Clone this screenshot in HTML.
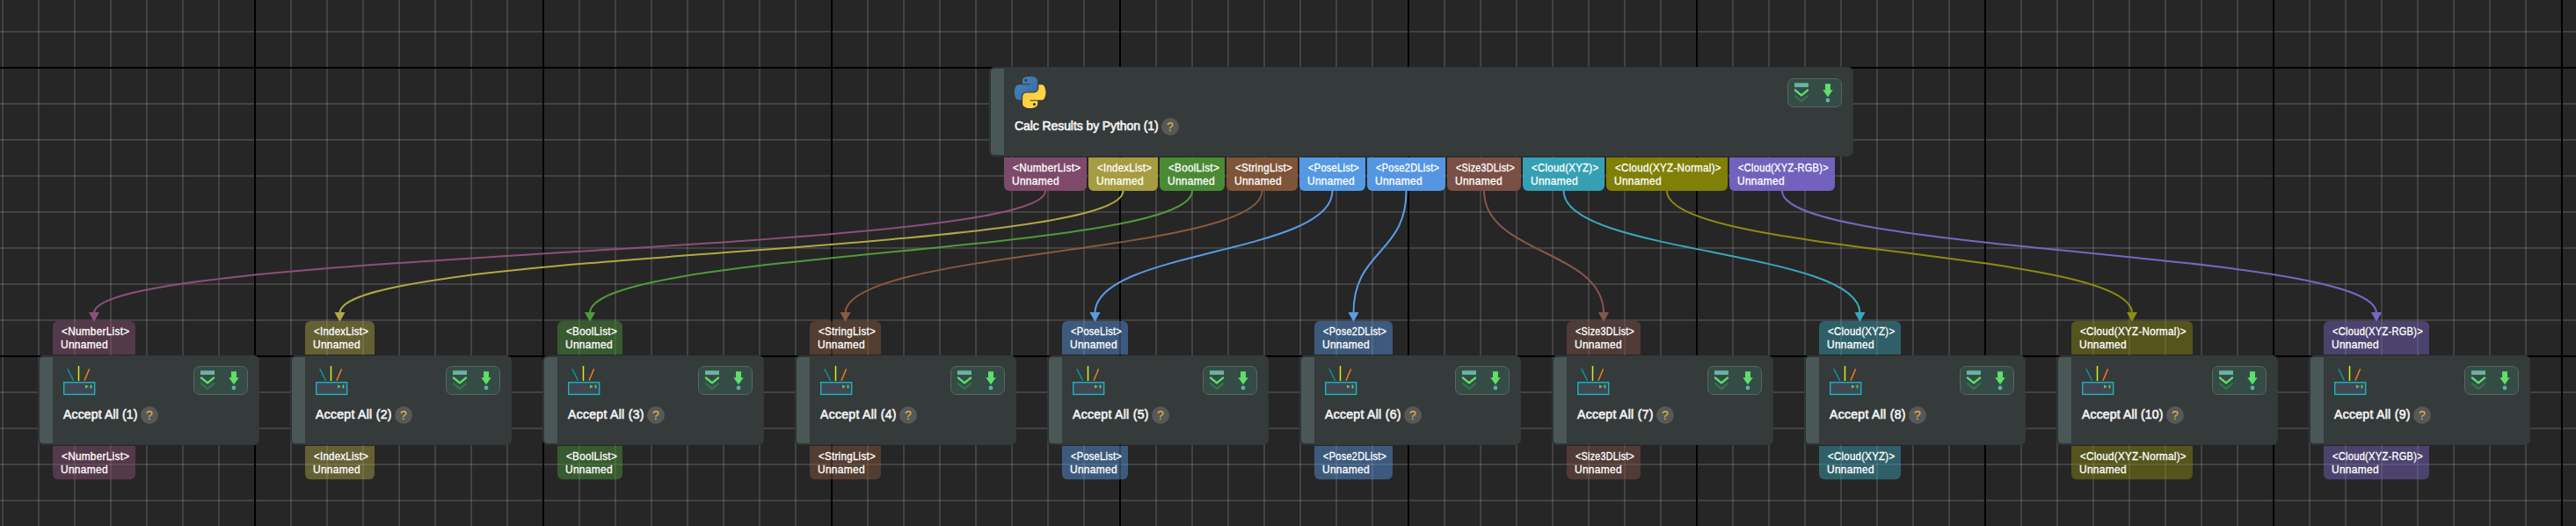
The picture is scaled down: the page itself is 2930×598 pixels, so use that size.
<!DOCTYPE html>
<html><head><meta charset="utf-8"><style>
html,body{margin:0;padding:0;}
body{width:2930px;height:598px;overflow:hidden;background:#262626;position:relative;font-family:"Liberation Sans",sans-serif;}
.abs{position:absolute;}
.node{position:absolute;box-sizing:border-box;background:#353a3a;border:1px solid #323737;border-radius:6px;}
.bar{position:absolute;left:0;top:0;bottom:0;width:15px;background:#4a5757;border:1px solid #2d3232;border-right:none;border-radius:5px 0 0 5px;}
.port{position:absolute;box-sizing:border-box;height:38px;color:#fff;font-weight:normal;font-size:12.2px;letter-spacing:0.3px;-webkit-text-stroke:0.3px #fff;line-height:15px;padding:5px 0 0 9.5px;white-space:pre;}
.port .l2{margin-left:-1px;}
.ptop{border-radius:0 0 6px 6px;}
.pin{border-radius:6px 6px 0 0;}
.pout{border-radius:0 0 6px 6px;}
.title{position:absolute;color:#f4f4f4;font-weight:normal;font-size:14px;-webkit-text-stroke:0.6px #f4f4f4;letter-spacing:-0.5px;white-space:pre;line-height:16px;}
.help{position:absolute;width:20px;height:20px;border-radius:50%;background:#575959;color:#e6b83c;font-size:14px;font-weight:normal;text-align:center;line-height:20px;}
.btns{position:absolute;box-sizing:border-box;width:62px;height:33px;border:1px solid #55675f;background:#354c46;border-radius:7px;}
</style></head><body>
<svg class="abs" style="left:0;top:0" width="2930" height="598"><rect x="2" y="0" width="2" height="598" fill="rgba(255,255,255,0.135)"/><rect x="43" y="0" width="2" height="598" fill="rgba(255,255,255,0.135)"/><rect x="84" y="0" width="2" height="598" fill="rgba(255,255,255,0.135)"/><rect x="125" y="0" width="2" height="598" fill="rgba(255,255,255,0.135)"/><rect x="166" y="0" width="2" height="598" fill="rgba(255,255,255,0.135)"/><rect x="207" y="0" width="2" height="598" fill="rgba(255,255,255,0.135)"/><rect x="248" y="0" width="2" height="598" fill="rgba(255,255,255,0.135)"/><rect x="330" y="0" width="2" height="598" fill="rgba(255,255,255,0.135)"/><rect x="371" y="0" width="2" height="598" fill="rgba(255,255,255,0.135)"/><rect x="412" y="0" width="2" height="598" fill="rgba(255,255,255,0.135)"/><rect x="453" y="0" width="2" height="598" fill="rgba(255,255,255,0.135)"/><rect x="494" y="0" width="2" height="598" fill="rgba(255,255,255,0.135)"/><rect x="535" y="0" width="2" height="598" fill="rgba(255,255,255,0.135)"/><rect x="576" y="0" width="2" height="598" fill="rgba(255,255,255,0.135)"/><rect x="658" y="0" width="2" height="598" fill="rgba(255,255,255,0.135)"/><rect x="699" y="0" width="2" height="598" fill="rgba(255,255,255,0.135)"/><rect x="740" y="0" width="2" height="598" fill="rgba(255,255,255,0.135)"/><rect x="781" y="0" width="2" height="598" fill="rgba(255,255,255,0.135)"/><rect x="822" y="0" width="2" height="598" fill="rgba(255,255,255,0.135)"/><rect x="863" y="0" width="2" height="598" fill="rgba(255,255,255,0.135)"/><rect x="904" y="0" width="2" height="598" fill="rgba(255,255,255,0.135)"/><rect x="986" y="0" width="2" height="598" fill="rgba(255,255,255,0.135)"/><rect x="1027" y="0" width="2" height="598" fill="rgba(255,255,255,0.135)"/><rect x="1068" y="0" width="2" height="598" fill="rgba(255,255,255,0.135)"/><rect x="1109" y="0" width="2" height="598" fill="rgba(255,255,255,0.135)"/><rect x="1150" y="0" width="2" height="598" fill="rgba(255,255,255,0.135)"/><rect x="1191" y="0" width="2" height="598" fill="rgba(255,255,255,0.135)"/><rect x="1232" y="0" width="2" height="598" fill="rgba(255,255,255,0.135)"/><rect x="1314" y="0" width="2" height="598" fill="rgba(255,255,255,0.135)"/><rect x="1355" y="0" width="2" height="598" fill="rgba(255,255,255,0.135)"/><rect x="1396" y="0" width="2" height="598" fill="rgba(255,255,255,0.135)"/><rect x="1437" y="0" width="2" height="598" fill="rgba(255,255,255,0.135)"/><rect x="1478" y="0" width="2" height="598" fill="rgba(255,255,255,0.135)"/><rect x="1519" y="0" width="2" height="598" fill="rgba(255,255,255,0.135)"/><rect x="1560" y="0" width="2" height="598" fill="rgba(255,255,255,0.135)"/><rect x="1642" y="0" width="2" height="598" fill="rgba(255,255,255,0.135)"/><rect x="1683" y="0" width="2" height="598" fill="rgba(255,255,255,0.135)"/><rect x="1724" y="0" width="2" height="598" fill="rgba(255,255,255,0.135)"/><rect x="1765" y="0" width="2" height="598" fill="rgba(255,255,255,0.135)"/><rect x="1806" y="0" width="2" height="598" fill="rgba(255,255,255,0.135)"/><rect x="1847" y="0" width="2" height="598" fill="rgba(255,255,255,0.135)"/><rect x="1888" y="0" width="2" height="598" fill="rgba(255,255,255,0.135)"/><rect x="1970" y="0" width="2" height="598" fill="rgba(255,255,255,0.135)"/><rect x="2011" y="0" width="2" height="598" fill="rgba(255,255,255,0.135)"/><rect x="2052" y="0" width="2" height="598" fill="rgba(255,255,255,0.135)"/><rect x="2093" y="0" width="2" height="598" fill="rgba(255,255,255,0.135)"/><rect x="2134" y="0" width="2" height="598" fill="rgba(255,255,255,0.135)"/><rect x="2175" y="0" width="2" height="598" fill="rgba(255,255,255,0.135)"/><rect x="2216" y="0" width="2" height="598" fill="rgba(255,255,255,0.135)"/><rect x="2298" y="0" width="2" height="598" fill="rgba(255,255,255,0.135)"/><rect x="2339" y="0" width="2" height="598" fill="rgba(255,255,255,0.135)"/><rect x="2380" y="0" width="2" height="598" fill="rgba(255,255,255,0.135)"/><rect x="2421" y="0" width="2" height="598" fill="rgba(255,255,255,0.135)"/><rect x="2462" y="0" width="2" height="598" fill="rgba(255,255,255,0.135)"/><rect x="2503" y="0" width="2" height="598" fill="rgba(255,255,255,0.135)"/><rect x="2544" y="0" width="2" height="598" fill="rgba(255,255,255,0.135)"/><rect x="2626" y="0" width="2" height="598" fill="rgba(255,255,255,0.135)"/><rect x="2667" y="0" width="2" height="598" fill="rgba(255,255,255,0.135)"/><rect x="2708" y="0" width="2" height="598" fill="rgba(255,255,255,0.135)"/><rect x="2749" y="0" width="2" height="598" fill="rgba(255,255,255,0.135)"/><rect x="2790" y="0" width="2" height="598" fill="rgba(255,255,255,0.135)"/><rect x="2831" y="0" width="2" height="598" fill="rgba(255,255,255,0.135)"/><rect x="2872" y="0" width="2" height="598" fill="rgba(255,255,255,0.135)"/><rect x="0" y="35" width="2930" height="2" fill="rgba(255,255,255,0.135)"/><rect x="0" y="117" width="2930" height="2" fill="rgba(255,255,255,0.135)"/><rect x="0" y="158" width="2930" height="2" fill="rgba(255,255,255,0.135)"/><rect x="0" y="199" width="2930" height="2" fill="rgba(255,255,255,0.135)"/><rect x="0" y="240" width="2930" height="2" fill="rgba(255,255,255,0.135)"/><rect x="0" y="281" width="2930" height="2" fill="rgba(255,255,255,0.135)"/><rect x="0" y="322" width="2930" height="2" fill="rgba(255,255,255,0.135)"/><rect x="0" y="363" width="2930" height="2" fill="rgba(255,255,255,0.135)"/><rect x="0" y="445" width="2930" height="2" fill="rgba(255,255,255,0.135)"/><rect x="0" y="486" width="2930" height="2" fill="rgba(255,255,255,0.135)"/><rect x="0" y="527" width="2930" height="2" fill="rgba(255,255,255,0.135)"/><rect x="0" y="568" width="2930" height="2" fill="rgba(255,255,255,0.135)"/><rect x="289" y="0" width="2" height="598" fill="#000"/><rect x="617" y="0" width="2" height="598" fill="#000"/><rect x="945" y="0" width="2" height="598" fill="#000"/><rect x="1273" y="0" width="2" height="598" fill="#000"/><rect x="1601" y="0" width="2" height="598" fill="#000"/><rect x="1929" y="0" width="2" height="598" fill="#000"/><rect x="2257" y="0" width="2" height="598" fill="#000"/><rect x="2585" y="0" width="2" height="598" fill="#000"/><rect x="2913" y="0" width="2" height="598" fill="#000"/><rect x="0" y="76" width="2930" height="2" fill="#000"/><rect x="0" y="404" width="2930" height="2" fill="#000"/></svg>
<svg class="abs" style="left:0;top:0" width="2930" height="598"><path d="M1189.0 217 C1189.0 289 107.0 284 107.0 356" stroke="#8c5078" stroke-width="2" fill="none"/><path d="M101.0 355 L113.0 355 L107.0 366 Z" fill="#8c5078"/><path d="M1277.5 217 C1277.5 289 386.5 284 386.5 356" stroke="#b0a845" stroke-width="2" fill="none"/><path d="M380.5 355 L392.5 355 L386.5 366 Z" fill="#b0a845"/><path d="M1356.0 217 C1356.0 289 671.0 284 671.0 356" stroke="#4f9a3a" stroke-width="2" fill="none"/><path d="M665.0 355 L677.0 355 L671.0 366 Z" fill="#4f9a3a"/><path d="M1435.5 217 C1435.5 289 961.5 284 961.5 356" stroke="#8a5a3c" stroke-width="2" fill="none"/><path d="M955.5 355 L967.5 355 L961.5 366 Z" fill="#8a5a3c"/><path d="M1515.5 217 C1515.5 289 1245.5 284 1245.5 356" stroke="#5a9be6" stroke-width="2" fill="none"/><path d="M1239.5 355 L1251.5 355 L1245.5 366 Z" fill="#5a9be6"/><path d="M1599.5 217 C1599.5 289 1539.5 284 1539.5 356" stroke="#5a9be6" stroke-width="2" fill="none"/><path d="M1533.5 355 L1545.5 355 L1539.5 366 Z" fill="#5a9be6"/><path d="M1688.0 217 C1688.0 289 1824.0 284 1824.0 356" stroke="#85564c" stroke-width="2" fill="none"/><path d="M1818.0 355 L1830.0 355 L1824.0 366 Z" fill="#85564c"/><path d="M1778.5 217 C1778.5 289 2115.5 284 2115.5 356" stroke="#3aa8bc" stroke-width="2" fill="none"/><path d="M2109.5 355 L2121.5 355 L2115.5 366 Z" fill="#3aa8bc"/><path d="M1896.0 217 C1896.0 289 2425.0 284 2425.0 356" stroke="#8c8c10" stroke-width="2" fill="none"/><path d="M2419.0 355 L2431.0 355 L2425.0 366 Z" fill="#8c8c10"/><path d="M2027.0 217 C2027.0 289 2703.0 284 2703.0 356" stroke="#7866c4" stroke-width="2" fill="none"/><path d="M2697.0 355 L2709.0 355 L2703.0 366 Z" fill="#7866c4"/></svg>
<div class="node" style="left:1125px;top:76px;width:983px;height:102px"><div class="bar"></div></div>
<svg class="abs" style="left:1153px;top:87px" width="37" height="36" viewBox="0 0 110 110">
<defs><linearGradient id="pyb" x1="0" y1="0" x2="1" y2="1"><stop offset="0" stop-color="#4886bd"/><stop offset="1" stop-color="#346a9a"/></linearGradient>
<linearGradient id="pyy" x1="0" y1="0" x2="1" y2="1"><stop offset="0" stop-color="#ffc834"/><stop offset="1" stop-color="#ffdb50"/></linearGradient></defs>
<path fill="url(#pyb)" d="M54.9 0.1c-4.6 0-8.9 0.4-12.7 1.1C31 3.2 29 7.3 29 14.9v10.1h26.2v3.4H19.2c-7.6 0-14.3 4.6-16.3 13.3-2.4 10-2.5 16.2 0 26.6 1.9 7.8 6.3 13.3 13.9 13.3h9v-12c0-8.7 7.5-16.3 16.3-16.3h26.2c7.3 0 13.1-6 13.1-13.3V14.9c0-7.1-6-12.4-13.1-13.6C63.8 0.4 59.2 0.1 54.9 0.1zM40.7 8.2c2.7 0 4.9 2.2 4.9 5 0 2.7-2.2 4.9-4.9 4.9-2.7 0-4.9-2.2-4.9-4.9C35.8 10.4 38 8.2 40.7 8.2z"/>
<path fill="url(#pyy)" d="M85 28.4v11.7c0 9-7.7 16.6-16.3 16.6H42.5c-7.2 0-13.1 6.1-13.1 13.3v25c0 7.1 6.2 11.3 13.1 13.3 8.3 2.4 16.3 2.9 26.2 0 6.6-1.9 13.1-5.7 13.1-13.3V85H55.6v-3.3h39.3c7.6 0 10.5-5.3 13.1-13.3 2.7-8.2 2.6-16.1 0-26.6-1.9-7.6-5.5-13.3-13.1-13.3H85zM70.3 91.3c2.7 0 4.9 2.2 4.9 4.9 0 2.7-2.2 5-4.9 5-2.7 0-4.9-2.2-4.9-5C65.4 93.5 67.6 91.3 70.3 91.3z"/>
</svg>
<div class="title" style="left:1154px;top:135.3px;letter-spacing:-0.08px">Calc Results by Python (1)</div>
<div class="help" style="left:1321px;top:134px">?</div>
<div class="btns" style="left:2033px;top:89px"><svg width="62" height="33" style="position:absolute;left:-1px;top:-1px">
<rect x="8" y="5.3" width="16" height="4.8" fill="#6ab3a0"/>
<polyline points="9,13.6 16,19.4 23,13.6" stroke="#5ee06a" stroke-width="2.4" stroke-linecap="round" stroke-linejoin="round" fill="none"/>
<polyline points="9,20.2 16,26 23,20.2" stroke="#3a7048" stroke-width="2.4" stroke-linecap="round" stroke-linejoin="round" fill="none"/>
<rect x="43" y="6.3" width="6" height="7.5" fill="#5ee06a"/>
<polygon points="40.3,13.2 51.7,13.2 46,21.2" fill="#5ee06a"/>
<circle cx="46" cy="25" r="2.4" fill="#5ab3a0"/>
</svg></div>
<div class="port ptop" style="left:1142px;top:179px;width:94px;background:#7e4a6b"><span style="display:inline-block;transform-origin:0 0;transform:scaleX(0.9654)">&lt;NumberList&gt;</span>
<span class="l2" style="display:inline-block;transform-origin:0 0;transform:scaleX(0.98)">Unnamed</span></div>
<div class="port ptop" style="left:1238px;top:179px;width:79px;background:#a69c41"><span style="display:inline-block;transform-origin:0 0;transform:scaleX(0.9375)">&lt;IndexList&gt;</span>
<span class="l2" style="display:inline-block;transform-origin:0 0;transform:scaleX(0.98)">Unnamed</span></div>
<div class="port ptop" style="left:1319px;top:179px;width:74px;background:#4b8a35"><span style="display:inline-block;transform-origin:0 0;transform:scaleX(0.9569)">&lt;BoolList&gt;</span>
<span class="l2" style="display:inline-block;transform-origin:0 0;transform:scaleX(0.98)">Unnamed</span></div>
<div class="port ptop" style="left:1395px;top:179px;width:81px;background:#7f5438"><span style="display:inline-block;transform-origin:0 0;transform:scaleX(0.9470)">&lt;StringList&gt;</span>
<span class="l2" style="display:inline-block;transform-origin:0 0;transform:scaleX(0.98)">Unnamed</span></div>
<div class="port ptop" style="left:1478px;top:179px;width:75px;background:#5599e4"><span style="display:inline-block;transform-origin:0 0;transform:scaleX(0.9081)">&lt;PoseList&gt;</span>
<span class="l2" style="display:inline-block;transform-origin:0 0;transform:scaleX(0.98)">Unnamed</span></div>
<div class="port ptop" style="left:1555px;top:179px;width:89px;background:#5596e2"><span style="display:inline-block;transform-origin:0 0;transform:scaleX(0.9000)">&lt;Pose2DList&gt;</span>
<span class="l2" style="display:inline-block;transform-origin:0 0;transform:scaleX(0.98)">Unnamed</span></div>
<div class="port ptop" style="left:1646px;top:179px;width:84px;background:#7a4f46"><span style="display:inline-block;transform-origin:0 0;transform:scaleX(0.8824)">&lt;Size3DList&gt;</span>
<span class="l2" style="display:inline-block;transform-origin:0 0;transform:scaleX(0.98)">Unnamed</span></div>
<div class="port ptop" style="left:1732px;top:179px;width:93px;background:#35a0b4"><span style="display:inline-block;transform-origin:0 0;transform:scaleX(0.9367)">&lt;Cloud(XYZ)&gt;</span>
<span class="l2" style="display:inline-block;transform-origin:0 0;transform:scaleX(0.98)">Unnamed</span></div>
<div class="port ptop" style="left:1827px;top:179px;width:138px;background:#808007"><span style="display:inline-block;transform-origin:0 0;transform:scaleX(0.9520)">&lt;Cloud(XYZ-Normal)&gt;</span>
<span class="l2" style="display:inline-block;transform-origin:0 0;transform:scaleX(0.98)">Unnamed</span></div>
<div class="port ptop" style="left:1967px;top:179px;width:120px;background:#7262bd"><span style="display:inline-block;transform-origin:0 0;transform:scaleX(0.9099)">&lt;Cloud(XYZ-RGB)&gt;</span>
<span class="l2" style="display:inline-block;transform-origin:0 0;transform:scaleX(0.98)">Unnamed</span></div>
<div class="port pin" style="left:60px;top:365px;width:94px;background:#8c507872"><span style="display:inline-block;transform-origin:0 0;transform:scaleX(0.9654)">&lt;NumberList&gt;</span>
<span class="l2" style="display:inline-block;transform-origin:0 0;transform:scaleX(0.98)">Unnamed</span></div>
<div class="node" style="left:43px;top:404px;width:252px;height:102px"><div class="bar"></div></div>
<svg class="abs" style="left:72px;top:416px" width="40" height="36">
<line x1="4.8" y1="3.2" x2="11.6" y2="16.8" stroke="#0b9494" stroke-width="1.5"/>
<line x1="17.5" y1="0" x2="17.5" y2="17" stroke="#d4ee1c" stroke-width="1.5"/>
<line x1="29.6" y1="3.4" x2="24" y2="16.8" stroke="#ee7e1e" stroke-width="1.5"/>
<rect x="0.7" y="18.7" width="35" height="13.7" fill="#3f4753" stroke="#1db3bd" stroke-width="1.4"/>
<polygon points="25,21.6 25,25.4 28.8,23.5" fill="#50d070"/>
<rect x="30.6" y="21.6" width="1.8" height="3.8" fill="#50d070"/>
</svg><div class="title" style="left:72px;top:463.4px;letter-spacing:0.15px">Accept All (1)</div>
<div class="help" style="left:160px;top:462px">?</div>
<div class="btns" style="left:220px;top:416px"><svg width="62" height="33" style="position:absolute;left:-1px;top:-1px">
<rect x="8" y="5.3" width="16" height="4.8" fill="#6ab3a0"/>
<polyline points="9,13.6 16,19.4 23,13.6" stroke="#5ee06a" stroke-width="2.4" stroke-linecap="round" stroke-linejoin="round" fill="none"/>
<polyline points="9,20.2 16,26 23,20.2" stroke="#3a7048" stroke-width="2.4" stroke-linecap="round" stroke-linejoin="round" fill="none"/>
<rect x="43" y="6.3" width="6" height="7.5" fill="#5ee06a"/>
<polygon points="40.3,13.2 51.7,13.2 46,21.2" fill="#5ee06a"/>
<circle cx="46" cy="25" r="2.4" fill="#5ab3a0"/>
</svg></div><div class="port pout" style="left:60px;top:507px;width:94px;background:#8c507872"><span style="display:inline-block;transform-origin:0 0;transform:scaleX(0.9654)">&lt;NumberList&gt;</span>
<span class="l2" style="display:inline-block;transform-origin:0 0;transform:scaleX(0.98)">Unnamed</span></div>
<div class="port pin" style="left:347px;top:365px;width:79px;background:#b0a84572"><span style="display:inline-block;transform-origin:0 0;transform:scaleX(0.9375)">&lt;IndexList&gt;</span>
<span class="l2" style="display:inline-block;transform-origin:0 0;transform:scaleX(0.98)">Unnamed</span></div>
<div class="node" style="left:330px;top:404px;width:252px;height:102px"><div class="bar"></div></div>
<svg class="abs" style="left:359px;top:416px" width="40" height="36">
<line x1="4.8" y1="3.2" x2="11.6" y2="16.8" stroke="#0b9494" stroke-width="1.5"/>
<line x1="17.5" y1="0" x2="17.5" y2="17" stroke="#d4ee1c" stroke-width="1.5"/>
<line x1="29.6" y1="3.4" x2="24" y2="16.8" stroke="#ee7e1e" stroke-width="1.5"/>
<rect x="0.7" y="18.7" width="35" height="13.7" fill="#3f4753" stroke="#1db3bd" stroke-width="1.4"/>
<polygon points="25,21.6 25,25.4 28.8,23.5" fill="#50d070"/>
<rect x="30.6" y="21.6" width="1.8" height="3.8" fill="#50d070"/>
</svg><div class="title" style="left:359px;top:463.4px;letter-spacing:0.3px">Accept All (2)</div>
<div class="help" style="left:449px;top:462px">?</div>
<div class="btns" style="left:507px;top:416px"><svg width="62" height="33" style="position:absolute;left:-1px;top:-1px">
<rect x="8" y="5.3" width="16" height="4.8" fill="#6ab3a0"/>
<polyline points="9,13.6 16,19.4 23,13.6" stroke="#5ee06a" stroke-width="2.4" stroke-linecap="round" stroke-linejoin="round" fill="none"/>
<polyline points="9,20.2 16,26 23,20.2" stroke="#3a7048" stroke-width="2.4" stroke-linecap="round" stroke-linejoin="round" fill="none"/>
<rect x="43" y="6.3" width="6" height="7.5" fill="#5ee06a"/>
<polygon points="40.3,13.2 51.7,13.2 46,21.2" fill="#5ee06a"/>
<circle cx="46" cy="25" r="2.4" fill="#5ab3a0"/>
</svg></div><div class="port pout" style="left:347px;top:507px;width:79px;background:#b0a84572"><span style="display:inline-block;transform-origin:0 0;transform:scaleX(0.9375)">&lt;IndexList&gt;</span>
<span class="l2" style="display:inline-block;transform-origin:0 0;transform:scaleX(0.98)">Unnamed</span></div>
<div class="port pin" style="left:634px;top:365px;width:74px;background:#4f9a3a72"><span style="display:inline-block;transform-origin:0 0;transform:scaleX(0.9569)">&lt;BoolList&gt;</span>
<span class="l2" style="display:inline-block;transform-origin:0 0;transform:scaleX(0.98)">Unnamed</span></div>
<div class="node" style="left:617px;top:404px;width:252px;height:102px"><div class="bar"></div></div>
<svg class="abs" style="left:646px;top:416px" width="40" height="36">
<line x1="4.8" y1="3.2" x2="11.6" y2="16.8" stroke="#0b9494" stroke-width="1.5"/>
<line x1="17.5" y1="0" x2="17.5" y2="17" stroke="#d4ee1c" stroke-width="1.5"/>
<line x1="29.6" y1="3.4" x2="24" y2="16.8" stroke="#ee7e1e" stroke-width="1.5"/>
<rect x="0.7" y="18.7" width="35" height="13.7" fill="#3f4753" stroke="#1db3bd" stroke-width="1.4"/>
<polygon points="25,21.6 25,25.4 28.8,23.5" fill="#50d070"/>
<rect x="30.6" y="21.6" width="1.8" height="3.8" fill="#50d070"/>
</svg><div class="title" style="left:646px;top:463.4px;letter-spacing:0.3px">Accept All (3)</div>
<div class="help" style="left:736px;top:462px">?</div>
<div class="btns" style="left:794px;top:416px"><svg width="62" height="33" style="position:absolute;left:-1px;top:-1px">
<rect x="8" y="5.3" width="16" height="4.8" fill="#6ab3a0"/>
<polyline points="9,13.6 16,19.4 23,13.6" stroke="#5ee06a" stroke-width="2.4" stroke-linecap="round" stroke-linejoin="round" fill="none"/>
<polyline points="9,20.2 16,26 23,20.2" stroke="#3a7048" stroke-width="2.4" stroke-linecap="round" stroke-linejoin="round" fill="none"/>
<rect x="43" y="6.3" width="6" height="7.5" fill="#5ee06a"/>
<polygon points="40.3,13.2 51.7,13.2 46,21.2" fill="#5ee06a"/>
<circle cx="46" cy="25" r="2.4" fill="#5ab3a0"/>
</svg></div><div class="port pout" style="left:634px;top:507px;width:74px;background:#4f9a3a72"><span style="display:inline-block;transform-origin:0 0;transform:scaleX(0.9569)">&lt;BoolList&gt;</span>
<span class="l2" style="display:inline-block;transform-origin:0 0;transform:scaleX(0.98)">Unnamed</span></div>
<div class="port pin" style="left:921px;top:365px;width:81px;background:#8a5a3c72"><span style="display:inline-block;transform-origin:0 0;transform:scaleX(0.9470)">&lt;StringList&gt;</span>
<span class="l2" style="display:inline-block;transform-origin:0 0;transform:scaleX(0.98)">Unnamed</span></div>
<div class="node" style="left:904px;top:404px;width:252px;height:102px"><div class="bar"></div></div>
<svg class="abs" style="left:933px;top:416px" width="40" height="36">
<line x1="4.8" y1="3.2" x2="11.6" y2="16.8" stroke="#0b9494" stroke-width="1.5"/>
<line x1="17.5" y1="0" x2="17.5" y2="17" stroke="#d4ee1c" stroke-width="1.5"/>
<line x1="29.6" y1="3.4" x2="24" y2="16.8" stroke="#ee7e1e" stroke-width="1.5"/>
<rect x="0.7" y="18.7" width="35" height="13.7" fill="#3f4753" stroke="#1db3bd" stroke-width="1.4"/>
<polygon points="25,21.6 25,25.4 28.8,23.5" fill="#50d070"/>
<rect x="30.6" y="21.6" width="1.8" height="3.8" fill="#50d070"/>
</svg><div class="title" style="left:933px;top:463.4px;letter-spacing:0.3px">Accept All (4)</div>
<div class="help" style="left:1023px;top:462px">?</div>
<div class="btns" style="left:1081px;top:416px"><svg width="62" height="33" style="position:absolute;left:-1px;top:-1px">
<rect x="8" y="5.3" width="16" height="4.8" fill="#6ab3a0"/>
<polyline points="9,13.6 16,19.4 23,13.6" stroke="#5ee06a" stroke-width="2.4" stroke-linecap="round" stroke-linejoin="round" fill="none"/>
<polyline points="9,20.2 16,26 23,20.2" stroke="#3a7048" stroke-width="2.4" stroke-linecap="round" stroke-linejoin="round" fill="none"/>
<rect x="43" y="6.3" width="6" height="7.5" fill="#5ee06a"/>
<polygon points="40.3,13.2 51.7,13.2 46,21.2" fill="#5ee06a"/>
<circle cx="46" cy="25" r="2.4" fill="#5ab3a0"/>
</svg></div><div class="port pout" style="left:921px;top:507px;width:81px;background:#8a5a3c72"><span style="display:inline-block;transform-origin:0 0;transform:scaleX(0.9470)">&lt;StringList&gt;</span>
<span class="l2" style="display:inline-block;transform-origin:0 0;transform:scaleX(0.98)">Unnamed</span></div>
<div class="port pin" style="left:1208px;top:365px;width:75px;background:#5a9be672"><span style="display:inline-block;transform-origin:0 0;transform:scaleX(0.9081)">&lt;PoseList&gt;</span>
<span class="l2" style="display:inline-block;transform-origin:0 0;transform:scaleX(0.98)">Unnamed</span></div>
<div class="node" style="left:1191px;top:404px;width:252px;height:102px"><div class="bar"></div></div>
<svg class="abs" style="left:1220px;top:416px" width="40" height="36">
<line x1="4.8" y1="3.2" x2="11.6" y2="16.8" stroke="#0b9494" stroke-width="1.5"/>
<line x1="17.5" y1="0" x2="17.5" y2="17" stroke="#d4ee1c" stroke-width="1.5"/>
<line x1="29.6" y1="3.4" x2="24" y2="16.8" stroke="#ee7e1e" stroke-width="1.5"/>
<rect x="0.7" y="18.7" width="35" height="13.7" fill="#3f4753" stroke="#1db3bd" stroke-width="1.4"/>
<polygon points="25,21.6 25,25.4 28.8,23.5" fill="#50d070"/>
<rect x="30.6" y="21.6" width="1.8" height="3.8" fill="#50d070"/>
</svg><div class="title" style="left:1220px;top:463.4px;letter-spacing:0.3px">Accept All (5)</div>
<div class="help" style="left:1310px;top:462px">?</div>
<div class="btns" style="left:1368px;top:416px"><svg width="62" height="33" style="position:absolute;left:-1px;top:-1px">
<rect x="8" y="5.3" width="16" height="4.8" fill="#6ab3a0"/>
<polyline points="9,13.6 16,19.4 23,13.6" stroke="#5ee06a" stroke-width="2.4" stroke-linecap="round" stroke-linejoin="round" fill="none"/>
<polyline points="9,20.2 16,26 23,20.2" stroke="#3a7048" stroke-width="2.4" stroke-linecap="round" stroke-linejoin="round" fill="none"/>
<rect x="43" y="6.3" width="6" height="7.5" fill="#5ee06a"/>
<polygon points="40.3,13.2 51.7,13.2 46,21.2" fill="#5ee06a"/>
<circle cx="46" cy="25" r="2.4" fill="#5ab3a0"/>
</svg></div><div class="port pout" style="left:1208px;top:507px;width:75px;background:#5a9be672"><span style="display:inline-block;transform-origin:0 0;transform:scaleX(0.9081)">&lt;PoseList&gt;</span>
<span class="l2" style="display:inline-block;transform-origin:0 0;transform:scaleX(0.98)">Unnamed</span></div>
<div class="port pin" style="left:1495px;top:365px;width:89px;background:#5a9be672"><span style="display:inline-block;transform-origin:0 0;transform:scaleX(0.9000)">&lt;Pose2DList&gt;</span>
<span class="l2" style="display:inline-block;transform-origin:0 0;transform:scaleX(0.98)">Unnamed</span></div>
<div class="node" style="left:1478px;top:404px;width:252px;height:102px"><div class="bar"></div></div>
<svg class="abs" style="left:1507px;top:416px" width="40" height="36">
<line x1="4.8" y1="3.2" x2="11.6" y2="16.8" stroke="#0b9494" stroke-width="1.5"/>
<line x1="17.5" y1="0" x2="17.5" y2="17" stroke="#d4ee1c" stroke-width="1.5"/>
<line x1="29.6" y1="3.4" x2="24" y2="16.8" stroke="#ee7e1e" stroke-width="1.5"/>
<rect x="0.7" y="18.7" width="35" height="13.7" fill="#3f4753" stroke="#1db3bd" stroke-width="1.4"/>
<polygon points="25,21.6 25,25.4 28.8,23.5" fill="#50d070"/>
<rect x="30.6" y="21.6" width="1.8" height="3.8" fill="#50d070"/>
</svg><div class="title" style="left:1507px;top:463.4px;letter-spacing:0.3px">Accept All (6)</div>
<div class="help" style="left:1597px;top:462px">?</div>
<div class="btns" style="left:1655px;top:416px"><svg width="62" height="33" style="position:absolute;left:-1px;top:-1px">
<rect x="8" y="5.3" width="16" height="4.8" fill="#6ab3a0"/>
<polyline points="9,13.6 16,19.4 23,13.6" stroke="#5ee06a" stroke-width="2.4" stroke-linecap="round" stroke-linejoin="round" fill="none"/>
<polyline points="9,20.2 16,26 23,20.2" stroke="#3a7048" stroke-width="2.4" stroke-linecap="round" stroke-linejoin="round" fill="none"/>
<rect x="43" y="6.3" width="6" height="7.5" fill="#5ee06a"/>
<polygon points="40.3,13.2 51.7,13.2 46,21.2" fill="#5ee06a"/>
<circle cx="46" cy="25" r="2.4" fill="#5ab3a0"/>
</svg></div><div class="port pout" style="left:1495px;top:507px;width:89px;background:#5a9be672"><span style="display:inline-block;transform-origin:0 0;transform:scaleX(0.9000)">&lt;Pose2DList&gt;</span>
<span class="l2" style="display:inline-block;transform-origin:0 0;transform:scaleX(0.98)">Unnamed</span></div>
<div class="port pin" style="left:1782px;top:365px;width:84px;background:#85564c72"><span style="display:inline-block;transform-origin:0 0;transform:scaleX(0.8824)">&lt;Size3DList&gt;</span>
<span class="l2" style="display:inline-block;transform-origin:0 0;transform:scaleX(0.98)">Unnamed</span></div>
<div class="node" style="left:1765px;top:404px;width:252px;height:102px"><div class="bar"></div></div>
<svg class="abs" style="left:1794px;top:416px" width="40" height="36">
<line x1="4.8" y1="3.2" x2="11.6" y2="16.8" stroke="#0b9494" stroke-width="1.5"/>
<line x1="17.5" y1="0" x2="17.5" y2="17" stroke="#d4ee1c" stroke-width="1.5"/>
<line x1="29.6" y1="3.4" x2="24" y2="16.8" stroke="#ee7e1e" stroke-width="1.5"/>
<rect x="0.7" y="18.7" width="35" height="13.7" fill="#3f4753" stroke="#1db3bd" stroke-width="1.4"/>
<polygon points="25,21.6 25,25.4 28.8,23.5" fill="#50d070"/>
<rect x="30.6" y="21.6" width="1.8" height="3.8" fill="#50d070"/>
</svg><div class="title" style="left:1794px;top:463.4px;letter-spacing:0.3px">Accept All (7)</div>
<div class="help" style="left:1884px;top:462px">?</div>
<div class="btns" style="left:1942px;top:416px"><svg width="62" height="33" style="position:absolute;left:-1px;top:-1px">
<rect x="8" y="5.3" width="16" height="4.8" fill="#6ab3a0"/>
<polyline points="9,13.6 16,19.4 23,13.6" stroke="#5ee06a" stroke-width="2.4" stroke-linecap="round" stroke-linejoin="round" fill="none"/>
<polyline points="9,20.2 16,26 23,20.2" stroke="#3a7048" stroke-width="2.4" stroke-linecap="round" stroke-linejoin="round" fill="none"/>
<rect x="43" y="6.3" width="6" height="7.5" fill="#5ee06a"/>
<polygon points="40.3,13.2 51.7,13.2 46,21.2" fill="#5ee06a"/>
<circle cx="46" cy="25" r="2.4" fill="#5ab3a0"/>
</svg></div><div class="port pout" style="left:1782px;top:507px;width:84px;background:#85564c72"><span style="display:inline-block;transform-origin:0 0;transform:scaleX(0.8824)">&lt;Size3DList&gt;</span>
<span class="l2" style="display:inline-block;transform-origin:0 0;transform:scaleX(0.98)">Unnamed</span></div>
<div class="port pin" style="left:2069px;top:365px;width:93px;background:#3aa8bc72"><span style="display:inline-block;transform-origin:0 0;transform:scaleX(0.9367)">&lt;Cloud(XYZ)&gt;</span>
<span class="l2" style="display:inline-block;transform-origin:0 0;transform:scaleX(0.98)">Unnamed</span></div>
<div class="node" style="left:2052px;top:404px;width:252px;height:102px"><div class="bar"></div></div>
<svg class="abs" style="left:2081px;top:416px" width="40" height="36">
<line x1="4.8" y1="3.2" x2="11.6" y2="16.8" stroke="#0b9494" stroke-width="1.5"/>
<line x1="17.5" y1="0" x2="17.5" y2="17" stroke="#d4ee1c" stroke-width="1.5"/>
<line x1="29.6" y1="3.4" x2="24" y2="16.8" stroke="#ee7e1e" stroke-width="1.5"/>
<rect x="0.7" y="18.7" width="35" height="13.7" fill="#3f4753" stroke="#1db3bd" stroke-width="1.4"/>
<polygon points="25,21.6 25,25.4 28.8,23.5" fill="#50d070"/>
<rect x="30.6" y="21.6" width="1.8" height="3.8" fill="#50d070"/>
</svg><div class="title" style="left:2081px;top:463.4px;letter-spacing:0.3px">Accept All (8)</div>
<div class="help" style="left:2171px;top:462px">?</div>
<div class="btns" style="left:2229px;top:416px"><svg width="62" height="33" style="position:absolute;left:-1px;top:-1px">
<rect x="8" y="5.3" width="16" height="4.8" fill="#6ab3a0"/>
<polyline points="9,13.6 16,19.4 23,13.6" stroke="#5ee06a" stroke-width="2.4" stroke-linecap="round" stroke-linejoin="round" fill="none"/>
<polyline points="9,20.2 16,26 23,20.2" stroke="#3a7048" stroke-width="2.4" stroke-linecap="round" stroke-linejoin="round" fill="none"/>
<rect x="43" y="6.3" width="6" height="7.5" fill="#5ee06a"/>
<polygon points="40.3,13.2 51.7,13.2 46,21.2" fill="#5ee06a"/>
<circle cx="46" cy="25" r="2.4" fill="#5ab3a0"/>
</svg></div><div class="port pout" style="left:2069px;top:507px;width:93px;background:#3aa8bc72"><span style="display:inline-block;transform-origin:0 0;transform:scaleX(0.9367)">&lt;Cloud(XYZ)&gt;</span>
<span class="l2" style="display:inline-block;transform-origin:0 0;transform:scaleX(0.98)">Unnamed</span></div>
<div class="port pin" style="left:2356px;top:365px;width:138px;background:#8c8c1072"><span style="display:inline-block;transform-origin:0 0;transform:scaleX(0.9520)">&lt;Cloud(XYZ-Normal)&gt;</span>
<span class="l2" style="display:inline-block;transform-origin:0 0;transform:scaleX(0.98)">Unnamed</span></div>
<div class="node" style="left:2339px;top:404px;width:252px;height:102px"><div class="bar"></div></div>
<svg class="abs" style="left:2368px;top:416px" width="40" height="36">
<line x1="4.8" y1="3.2" x2="11.6" y2="16.8" stroke="#0b9494" stroke-width="1.5"/>
<line x1="17.5" y1="0" x2="17.5" y2="17" stroke="#d4ee1c" stroke-width="1.5"/>
<line x1="29.6" y1="3.4" x2="24" y2="16.8" stroke="#ee7e1e" stroke-width="1.5"/>
<rect x="0.7" y="18.7" width="35" height="13.7" fill="#3f4753" stroke="#1db3bd" stroke-width="1.4"/>
<polygon points="25,21.6 25,25.4 28.8,23.5" fill="#50d070"/>
<rect x="30.6" y="21.6" width="1.8" height="3.8" fill="#50d070"/>
</svg><div class="title" style="left:2368px;top:463.4px;letter-spacing:0.15px">Accept All (10)</div>
<div class="help" style="left:2464px;top:462px">?</div>
<div class="btns" style="left:2516px;top:416px"><svg width="62" height="33" style="position:absolute;left:-1px;top:-1px">
<rect x="8" y="5.3" width="16" height="4.8" fill="#6ab3a0"/>
<polyline points="9,13.6 16,19.4 23,13.6" stroke="#5ee06a" stroke-width="2.4" stroke-linecap="round" stroke-linejoin="round" fill="none"/>
<polyline points="9,20.2 16,26 23,20.2" stroke="#3a7048" stroke-width="2.4" stroke-linecap="round" stroke-linejoin="round" fill="none"/>
<rect x="43" y="6.3" width="6" height="7.5" fill="#5ee06a"/>
<polygon points="40.3,13.2 51.7,13.2 46,21.2" fill="#5ee06a"/>
<circle cx="46" cy="25" r="2.4" fill="#5ab3a0"/>
</svg></div><div class="port pout" style="left:2356px;top:507px;width:138px;background:#8c8c1072"><span style="display:inline-block;transform-origin:0 0;transform:scaleX(0.9520)">&lt;Cloud(XYZ-Normal)&gt;</span>
<span class="l2" style="display:inline-block;transform-origin:0 0;transform:scaleX(0.98)">Unnamed</span></div>
<div class="port pin" style="left:2643px;top:365px;width:120px;background:#7866c472"><span style="display:inline-block;transform-origin:0 0;transform:scaleX(0.9099)">&lt;Cloud(XYZ-RGB)&gt;</span>
<span class="l2" style="display:inline-block;transform-origin:0 0;transform:scaleX(0.98)">Unnamed</span></div>
<div class="node" style="left:2626px;top:404px;width:252px;height:102px"><div class="bar"></div></div>
<svg class="abs" style="left:2655px;top:416px" width="40" height="36">
<line x1="4.8" y1="3.2" x2="11.6" y2="16.8" stroke="#0b9494" stroke-width="1.5"/>
<line x1="17.5" y1="0" x2="17.5" y2="17" stroke="#d4ee1c" stroke-width="1.5"/>
<line x1="29.6" y1="3.4" x2="24" y2="16.8" stroke="#ee7e1e" stroke-width="1.5"/>
<rect x="0.7" y="18.7" width="35" height="13.7" fill="#3f4753" stroke="#1db3bd" stroke-width="1.4"/>
<polygon points="25,21.6 25,25.4 28.8,23.5" fill="#50d070"/>
<rect x="30.6" y="21.6" width="1.8" height="3.8" fill="#50d070"/>
</svg><div class="title" style="left:2655px;top:463.4px;letter-spacing:0.3px">Accept All (9)</div>
<div class="help" style="left:2745px;top:462px">?</div>
<div class="btns" style="left:2803px;top:416px"><svg width="62" height="33" style="position:absolute;left:-1px;top:-1px">
<rect x="8" y="5.3" width="16" height="4.8" fill="#6ab3a0"/>
<polyline points="9,13.6 16,19.4 23,13.6" stroke="#5ee06a" stroke-width="2.4" stroke-linecap="round" stroke-linejoin="round" fill="none"/>
<polyline points="9,20.2 16,26 23,20.2" stroke="#3a7048" stroke-width="2.4" stroke-linecap="round" stroke-linejoin="round" fill="none"/>
<rect x="43" y="6.3" width="6" height="7.5" fill="#5ee06a"/>
<polygon points="40.3,13.2 51.7,13.2 46,21.2" fill="#5ee06a"/>
<circle cx="46" cy="25" r="2.4" fill="#5ab3a0"/>
</svg></div><div class="port pout" style="left:2643px;top:507px;width:120px;background:#7866c472"><span style="display:inline-block;transform-origin:0 0;transform:scaleX(0.9099)">&lt;Cloud(XYZ-RGB)&gt;</span>
<span class="l2" style="display:inline-block;transform-origin:0 0;transform:scaleX(0.98)">Unnamed</span></div>
</body></html>
